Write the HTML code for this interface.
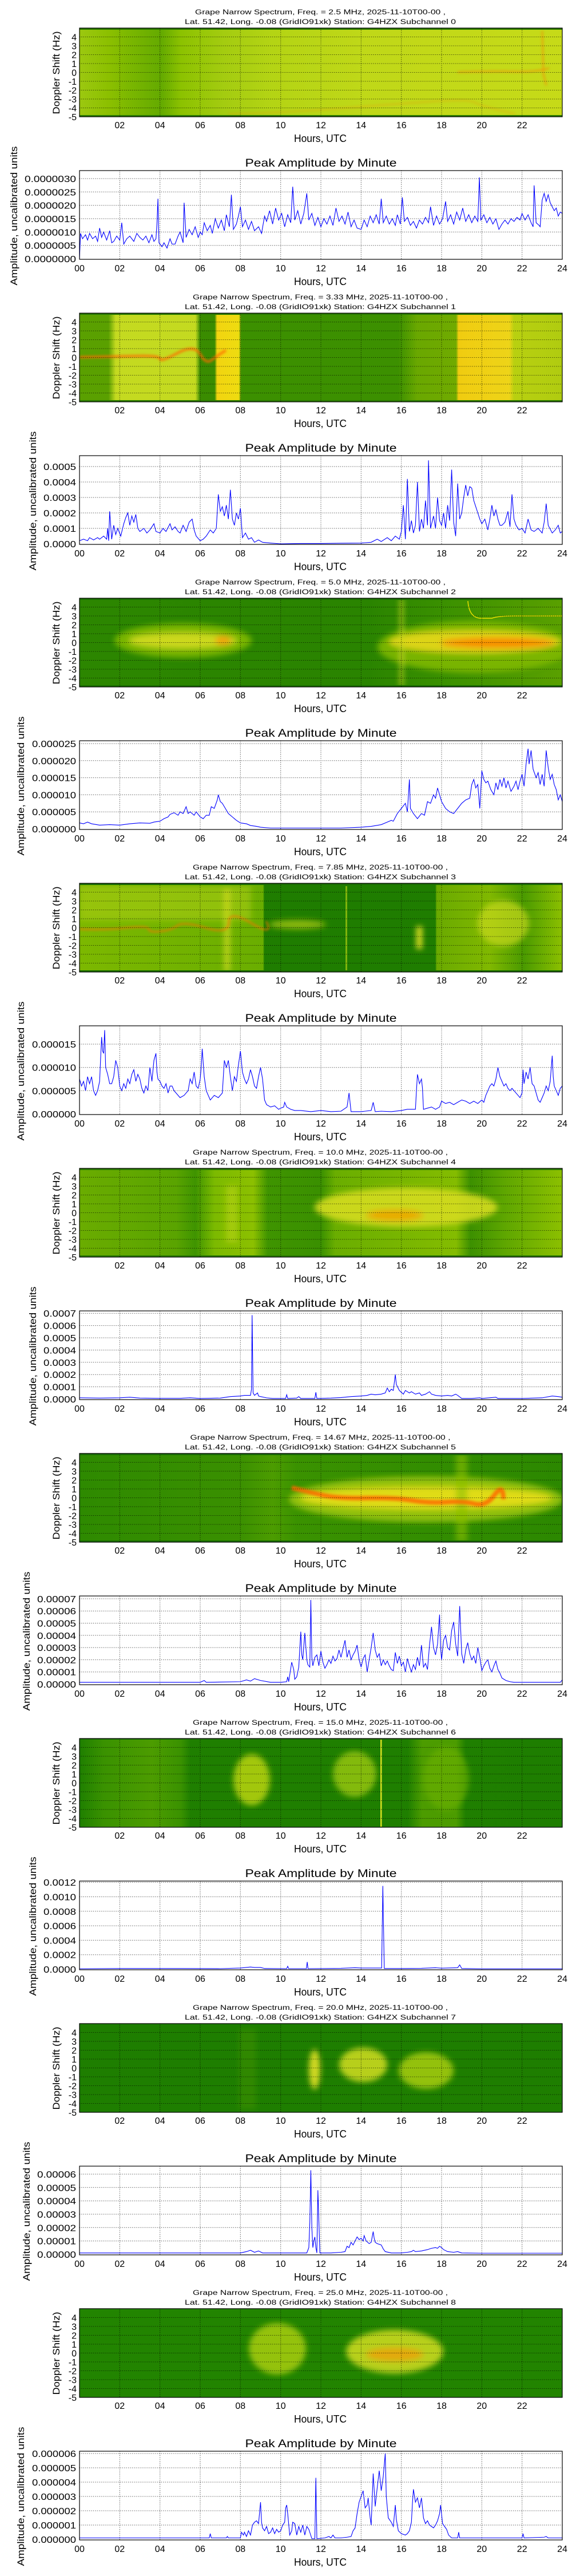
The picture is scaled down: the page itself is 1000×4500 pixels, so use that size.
<!DOCTYPE html>
<html><head><meta charset="utf-8">
<style>
html,body{margin:0;padding:0;background:#fff;}
svg{display:block;}
text{font-family:"Liberation Sans",sans-serif;fill:#000;}
.t{font-size:11.5px;text-anchor:middle;}
.tk{font-size:16px;}
.xm{text-anchor:middle;}
.ye{text-anchor:end;}
.hl{font-size:18px;text-anchor:middle;}
.at{font-size:19px;text-anchor:middle;}
.yl{font-size:17px;text-anchor:middle;}
.g{stroke:#000;stroke-width:1;stroke-dasharray:1.2,2.2;opacity:.75;fill:none;}
.bx{fill:none;stroke:#000;stroke-width:1.2;}
.c{fill:none;stroke:#0000ff;stroke-width:1.1;}
</style></head><body>
<svg width="1000" height="4500" viewBox="0 0 1000 4500" xmlns="http://www.w3.org/2000/svg">
<defs>
<filter id="b" x="-50%" y="-50%" width="200%" height="200%"><feGaussianBlur stdDeviation="5"/></filter>
<filter id="b2" x="-50%" y="-50%" width="200%" height="200%"><feGaussianBlur stdDeviation="2"/></filter>
<clipPath id="sc"><rect x="139" y="0" width="844" height="155"/></clipPath>
<linearGradient id="g0" x1="0" x2="1" y1="0" y2="0">
<stop offset="0" stop-color="#9cc810"/><stop offset=".06" stop-color="#8cc000"/><stop offset=".1" stop-color="#7cb800"/><stop offset=".17" stop-color="#64aa00"/><stop offset=".21" stop-color="#8cc200"/><stop offset=".3" stop-color="#a4cc10"/><stop offset=".4" stop-color="#b4d414"/><stop offset=".6" stop-color="#c0d818"/><stop offset="1" stop-color="#c6da18"/></linearGradient>
<linearGradient id="g1" x1="0" x2="1" y1="0" y2="0">
<stop offset="0" stop-color="#5aa000"/><stop offset=".06" stop-color="#5aa000"/><stop offset=".075" stop-color="#c4da20"/><stop offset=".24" stop-color="#c4da20"/><stop offset=".25" stop-color="#3a8c00"/><stop offset=".28" stop-color="#3a8c00"/><stop offset=".285" stop-color="#f2d410"/><stop offset=".33" stop-color="#eedc10"/><stop offset=".335" stop-color="#3c9000"/><stop offset=".66" stop-color="#3c9000"/><stop offset=".7" stop-color="#6aa800"/><stop offset=".78" stop-color="#70aa00"/><stop offset=".785" stop-color="#f0cc10"/><stop offset=".89" stop-color="#eed418"/><stop offset=".9" stop-color="#b8d010"/><stop offset="1" stop-color="#b0cc10"/></linearGradient>
<linearGradient id="g2" x1="0" x2="1" y1="0" y2="0">
<stop offset="0" stop-color="#2c8600"/><stop offset=".6" stop-color="#2a8400"/><stop offset=".75" stop-color="#3a9000"/><stop offset="1" stop-color="#5aa000"/></linearGradient>
<linearGradient id="g3" x1="0" x2="1" y1="0" y2="0">
<stop offset="0" stop-color="#7cb800"/><stop offset=".38" stop-color="#6aae00"/><stop offset=".383" stop-color="#1f7d00"/><stop offset=".737" stop-color="#1f7d00"/><stop offset=".74" stop-color="#6aaa00"/><stop offset=".85" stop-color="#80b800"/><stop offset=".92" stop-color="#4a9a00"/><stop offset="1" stop-color="#8cc000"/></linearGradient>
<linearGradient id="g4" x1="0" x2="1" y1="0" y2="0">
<stop offset="0" stop-color="#6aac00"/><stop offset=".2" stop-color="#5aa400"/><stop offset=".24" stop-color="#3f9400"/><stop offset=".28" stop-color="#7cba00"/><stop offset=".36" stop-color="#8cc000"/><stop offset=".39" stop-color="#3f9400"/><stop offset=".5" stop-color="#3a9000"/><stop offset=".53" stop-color="#6aae00"/><stop offset=".78" stop-color="#84bc00"/><stop offset=".81" stop-color="#3c9000"/><stop offset=".88" stop-color="#5ea600"/><stop offset="1" stop-color="#8cc000"/></linearGradient>
<linearGradient id="g5" x1="0" x2="1" y1="0" y2="0">
<stop offset="0" stop-color="#2e8a00"/><stop offset=".33" stop-color="#3a9000"/><stop offset=".4" stop-color="#4c9c00"/><stop offset=".45" stop-color="#3a9200"/><stop offset=".9" stop-color="#2e8a00"/><stop offset="1" stop-color="#2c8800"/></linearGradient>
<linearGradient id="g6" x1="0" x2="1" y1="0" y2="0">
<stop offset="0" stop-color="#1f7f00"/><stop offset=".05" stop-color="#3a9200"/><stop offset=".15" stop-color="#4c9c00"/><stop offset=".21" stop-color="#3a9200"/><stop offset=".23" stop-color="#1f7f00"/><stop offset=".68" stop-color="#1f7f00"/><stop offset=".71" stop-color="#4c9c00"/><stop offset=".78" stop-color="#4c9c00"/><stop offset=".8" stop-color="#1f7f00"/><stop offset="1" stop-color="#1e7e00"/></linearGradient>
</defs>
<rect width="1000" height="4500" fill="#fff"/>

<!-- ================= PANEL 0 ================= -->
<g transform="translate(0,49)">
<text class="t" x="560" y="-24" textLength="438" lengthAdjust="spacingAndGlyphs">Grape Narrow Spectrum, Freq. = 2.5 MHz, 2025-11-10T00-00 ,</text>
<text class="t" x="560" y="-7" textLength="474" lengthAdjust="spacingAndGlyphs">Lat.  51.42, Long.  -0.08 (GridIO91xk) Station: G4HZX Subchannel 0</text>
<g clip-path="url(#sc)">
<rect x="139" y="0" width="844" height="155" fill="url(#g0)"/>
<g filter="url(#b2)" fill="none" stroke="#ff8000" opacity=".8">
<path d="M800 77 Q860 75 900 76 T960 70" stroke-width="2"/>
<path d="M948 5 L950 80 L955 100" stroke-width="2"/>
<path d="M400 150 Q500 148 600 140 T760 128 T830 130 T900 150" stroke-width="1.5" opacity=".6"/>
</g>
<rect x="139" y="0" width="844" height="3" fill="#2a7a00"/><rect x="139" y="152" width="844" height="3" fill="#2a7a00"/>
</g>
</g>

<!-- ================= PANEL 1 ================= -->
<g transform="translate(0,547)">
<text class="t" x="560" y="-24" textLength="446" lengthAdjust="spacingAndGlyphs">Grape Narrow Spectrum, Freq. = 3.33 MHz, 2025-11-10T00-00 ,</text>
<text class="t" x="560" y="-7" textLength="474" lengthAdjust="spacingAndGlyphs">Lat.  51.42, Long.  -0.08 (GridIO91xk) Station: G4HZX Subchannel 1</text>
<g clip-path="url(#sc)">
<rect x="139" y="0" width="844" height="155" fill="url(#g1)"/>
<g filter="url(#b2)" fill="none" stroke="#ff6a00" opacity=".85">
<path d="M139 77 Q200 76 240 75 T280 80 T310 70 T350 72 T370 82 T395 65" stroke-width="4"/>
</g>
<rect x="139" y="0" width="844" height="3" fill="#2a7a00"/><rect x="139" y="152" width="844" height="3" fill="#2a7a00"/>
</g>
</g>

<!-- ================= PANEL 2 ================= -->
<g transform="translate(0,1045)">
<text class="t" x="560" y="-24" textLength="438" lengthAdjust="spacingAndGlyphs">Grape Narrow Spectrum, Freq. = 5.0 MHz, 2025-11-10T00-00 ,</text>
<text class="t" x="560" y="-7" textLength="474" lengthAdjust="spacingAndGlyphs">Lat.  51.42, Long.  -0.08 (GridIO91xk) Station: G4HZX Subchannel 2</text>
<g clip-path="url(#sc)">
<rect x="139" y="0" width="844" height="155" fill="url(#g2)"/>
<g filter="url(#b)">
<ellipse cx="320" cy="74" rx="120" ry="30" fill="#8cc000" opacity=".8"/>
<ellipse cx="320" cy="74" rx="95" ry="14" fill="#d4dc20" opacity=".9"/>
<ellipse cx="390" cy="74" rx="14" ry="8" fill="#ff9000" opacity=".7"/>
<ellipse cx="830" cy="85" rx="170" ry="45" fill="#80b800" opacity=".9"/>
<ellipse cx="830" cy="76" rx="150" ry="20" fill="#dcd418"/>
<ellipse cx="870" cy="78" rx="100" ry="9" fill="#ff7a00" opacity=".8"/>
<rect x="699" y="0" width="6" height="155" fill="#c8d820" opacity=".8"/>
</g>
<path d="M818 5 Q820 34 840 35 L860 35 Q870 31 900 31 L983 31" stroke="#e8e000" stroke-width="1.5" fill="none"/>
<rect x="139" y="0" width="844" height="3" fill="#1a6e00"/><rect x="139" y="152" width="844" height="3" fill="#1a6e00"/>
</g>
</g>

<!-- ================= PANEL 3 ================= -->
<g transform="translate(0,1543)">
<text class="t" x="560" y="-24" textLength="446" lengthAdjust="spacingAndGlyphs">Grape Narrow Spectrum, Freq. = 7.85 MHz, 2025-11-10T00-00 ,</text>
<text class="t" x="560" y="-7" textLength="474" lengthAdjust="spacingAndGlyphs">Lat.  51.42, Long.  -0.08 (GridIO91xk) Station: G4HZX Subchannel 3</text>
<g clip-path="url(#sc)">
<rect x="139" y="0" width="844" height="155" fill="url(#g3)"/>
<g filter="url(#b)">
<rect x="139" y="5" width="300" height="60" fill="#a8cc10" opacity=".6"/>
<rect x="392" y="10" width="10" height="145" fill="#d0dc20" opacity=".8"/>
<ellipse cx="520" cy="72" rx="50" ry="8" fill="#b8d010" opacity=".7"/>
<rect x="728" y="75" width="10" height="40" fill="#e0e020"/>
<ellipse cx="880" cy="70" rx="45" ry="40" fill="#c8d820" opacity=".7"/>
</g>
<rect x="604" y="5" width="3" height="150" fill="#a8cc10" opacity=".7"/>
<path d="M139 80 Q180 82 220 78 T260 80 T280 84 T310 74 T360 78 T400 68 T440 70 T465 66" stroke="#ff7000" stroke-width="2.5" fill="none" opacity=".8" filter="url(#b2)"/>
<rect x="139" y="0" width="844" height="3" fill="#1a6e00"/><rect x="139" y="152" width="844" height="3" fill="#1a6e00"/>
</g>
</g>

<!-- ================= PANEL 4 ================= -->
<g transform="translate(0,2041)">
<text class="t" x="560" y="-24" textLength="446" lengthAdjust="spacingAndGlyphs">Grape Narrow Spectrum, Freq. = 10.0 MHz, 2025-11-10T00-00 ,</text>
<text class="t" x="560" y="-7" textLength="474" lengthAdjust="spacingAndGlyphs">Lat.  51.42, Long.  -0.08 (GridIO91xk) Station: G4HZX Subchannel 4</text>
<g clip-path="url(#sc)">
<rect x="139" y="0" width="844" height="155" fill="url(#g4)"/>
<g filter="url(#b)">
<ellipse cx="710" cy="68" rx="160" ry="34" fill="#d4dc20" opacity=".9"/>
<ellipse cx="690" cy="82" rx="50" ry="10" fill="#f0a000" opacity=".8"/>
<rect x="395" y="30" width="20" height="100" fill="#b8d410" opacity=".6"/>
</g>
<rect x="139" y="0" width="844" height="3" fill="#2a7a00"/><rect x="139" y="152" width="844" height="3" fill="#2a7a00"/>
</g>
</g>

<!-- ================= PANEL 5 ================= -->
<g transform="translate(0,2539)">
<text class="t" x="560" y="-24" textLength="455" lengthAdjust="spacingAndGlyphs">Grape Narrow Spectrum, Freq. = 14.67 MHz, 2025-11-10T00-00 ,</text>
<text class="t" x="560" y="-7" textLength="474" lengthAdjust="spacingAndGlyphs">Lat.  51.42, Long.  -0.08 (GridIO91xk) Station: G4HZX Subchannel 5</text>
<g clip-path="url(#sc)">
<rect x="139" y="0" width="844" height="155" fill="url(#g5)"/>
<g filter="url(#b)">
<ellipse cx="745" cy="80" rx="240" ry="40" fill="#a8cc10" opacity=".8"/>
<ellipse cx="745" cy="78" rx="220" ry="20" fill="#e0dc18"/>
<rect x="797" y="0" width="20" height="155" fill="#8cc000" opacity=".6"/>
</g>
<path d="M510 60 Q530 65 560 72 T640 78 T720 82 T780 85 T830 88 T865 72 T880 80" stroke="#ff6a00" stroke-width="8" fill="none" opacity=".85" filter="url(#b2)"/>
<rect x="139" y="0" width="844" height="3" fill="#1a6e00"/><rect x="139" y="152" width="844" height="3" fill="#1a6e00"/>
</g>
</g>

<!-- ================= PANEL 6 ================= -->
<g transform="translate(0,3037)">
<text class="t" x="560" y="-24" textLength="446" lengthAdjust="spacingAndGlyphs">Grape Narrow Spectrum, Freq. = 15.0 MHz, 2025-11-10T00-00 ,</text>
<text class="t" x="560" y="-7" textLength="474" lengthAdjust="spacingAndGlyphs">Lat.  51.42, Long.  -0.08 (GridIO91xk) Station: G4HZX Subchannel 6</text>
<g clip-path="url(#sc)">
<rect x="139" y="0" width="844" height="155" fill="url(#g6)"/>
<g filter="url(#b)">
<ellipse cx="440" cy="72" rx="32" ry="45" fill="#b8d410" opacity=".85"/>
<ellipse cx="620" cy="62" rx="38" ry="40" fill="#9cc810" opacity=".8"/>
<ellipse cx="780" cy="70" rx="40" ry="55" fill="#6aae00" opacity=".7"/>
</g>
<rect x="665" y="2" width="2.5" height="152" fill="#d8e020"/>
<rect x="139" y="0" width="844" height="2" fill="#1a6e00"/>
</g>
</g>

<!-- ================= PANEL 7 ================= -->
<g transform="translate(0,3535)">
<text class="t" x="560" y="-24" textLength="446" lengthAdjust="spacingAndGlyphs">Grape Narrow Spectrum, Freq. = 20.0 MHz, 2025-11-10T00-00 ,</text>
<text class="t" x="560" y="-7" textLength="474" lengthAdjust="spacingAndGlyphs">Lat.  51.42, Long.  -0.08 (GridIO91xk) Station: G4HZX Subchannel 7</text>
<g clip-path="url(#sc)">
<rect x="139" y="0" width="844" height="155" fill="#1e7e00"/>
<g filter="url(#b)">
<ellipse cx="550" cy="80" rx="10" ry="35" fill="#d0d820"/>
<ellipse cx="635" cy="72" rx="42" ry="30" fill="#c8d820" opacity=".9"/>
<ellipse cx="745" cy="82" rx="48" ry="32" fill="#a8cc10" opacity=".85"/>
<rect x="418" y="10" width="30" height="140" fill="#3a9000" opacity=".6"/>
</g>
</g>
</g>

<!-- ================= PANEL 8 ================= -->
<g transform="translate(0,4033)">
<text class="t" x="560" y="-24" textLength="446" lengthAdjust="spacingAndGlyphs">Grape Narrow Spectrum, Freq. = 25.0 MHz, 2025-11-10T00-00 ,</text>
<text class="t" x="560" y="-7" textLength="474" lengthAdjust="spacingAndGlyphs">Lat.  51.42, Long.  -0.08 (GridIO91xk) Station: G4HZX Subchannel 8</text>
<g clip-path="url(#sc)">
<rect x="139" y="0" width="844" height="155" fill="#228400"/>
<g filter="url(#b)">
<ellipse cx="485" cy="70" rx="50" ry="45" fill="#a8cc10" opacity=".85"/>
<ellipse cx="690" cy="75" rx="85" ry="38" fill="#c8d820" opacity=".9"/>
<ellipse cx="690" cy="80" rx="50" ry="12" fill="#ff9000" opacity=".6"/>
</g>
</g>
</g>

<!-- ========= COMMON AXES FOR ALL PANELS (written out per panel) ========= -->
<g id="axes">
</g>

<!-- panel axes: repeated blocks -->
<g transform="translate(0,49)">
<path class="g" d="M209.3 0V155M279.7 0V155M350 0V155M420.3 0V155M490.7 0V155M561 0V155M631.3 0V155M701.7 0V155M772 0V155M842.3 0V155M912.7 0V155M139 15.5H983M139 31H983M139 46.5H983M139 62H983M139 77.5H983M139 93H983M139 108.5H983M139 124H983M139 139.5H983"/>
<rect class="bx" x="139" y="0" width="844" height="155"/>
<text class="yl" transform="translate(104,78) rotate(-90)" textLength="145" lengthAdjust="spacingAndGlyphs">Doppler Shift (Hz)</text>
<g class="tk ye"><text x="134" y="21.5">4</text><text x="134" y="37">3</text><text x="134" y="52.5">2</text><text x="134" y="68">1</text><text x="134" y="83.5">0</text><text x="134" y="99">-1</text><text x="134" y="114.5">-2</text><text x="134" y="130">-3</text><text x="134" y="145.5">-4</text><text x="134" y="161">-5</text></g>
<g class="tk xm"><text x="209.3" y="175">02</text><text x="279.7" y="175">04</text><text x="350" y="175">06</text><text x="420.3" y="175">08</text><text x="490.7" y="175">10</text><text x="561" y="175">12</text><text x="631.3" y="175">14</text><text x="701.7" y="175">16</text><text x="772" y="175">18</text><text x="842.3" y="175">20</text><text x="912.7" y="175">22</text></g>
<text class="hl" x="560" y="199" textLength="92" lengthAdjust="spacingAndGlyphs">Hours, UTC</text>
<text class="at" x="561" y="242" textLength="265" lengthAdjust="spacingAndGlyphs">Peak Amplitude by Minute</text>
<path class="g" d="M209.3 249V404M279.7 249V404M350 249V404M420.3 249V404M490.7 249V404M561 249V404M631.3 249V404M701.7 249V404M772 249V404M842.3 249V404M912.7 249V404M139 263H983M139 286.3H983M139 309.7H983M139 333H983M139 356.3H983M139 379.7H983"/>
<g class="tk ye"><text x="133" y="269" textLength="90" lengthAdjust="spacingAndGlyphs">0.0000030</text><text x="133" y="292.3" textLength="90" lengthAdjust="spacingAndGlyphs">0.0000025</text><text x="133" y="315.7" textLength="90" lengthAdjust="spacingAndGlyphs">0.0000020</text><text x="133" y="339" textLength="90" lengthAdjust="spacingAndGlyphs">0.0000015</text><text x="133" y="362.3" textLength="90" lengthAdjust="spacingAndGlyphs">0.0000010</text><text x="133" y="385.7" textLength="90" lengthAdjust="spacingAndGlyphs">0.0000005</text><text x="133" y="409" textLength="90" lengthAdjust="spacingAndGlyphs">0.0000000</text></g>
<g transform="translate(139,403) scale(35.1667,-23.3)"><polyline class="c" vector-effect="non-scaling-stroke" points="0,0 0.05,1.9 0.15,1.5 0.3,1.8 0.4,1.4 0.5,1.9 0.65,1.5 0.8,1.7 0.9,1.3 1,2.3 1.1,1.6 1.2,2.0 1.35,1.4 1.5,2.1 1.6,1.2 1.7,1.3 1.85,1.7 2,1.4 2.1,2.7 2.2,1.1 2.35,1.5 2.5,1.7 2.7,1.3 2.85,1.9 3,1.6 3.15,1.4 3.3,1.7 3.45,1.2 3.6,1.8 3.7,1.3 3.8,1.5 3.85,2.6 3.9,4.5 3.95,1.2 4.1,0.9 4.2,1.2 4.35,0.8 4.5,1.5 4.6,1.1 4.75,1.1 4.9,1.7 5,2.0 5.15,1.2 5.2,4.2 5.3,1.6 5.45,2.2 5.6,1.8 5.75,2.4 5.9,1.6 6,2.0 6.1,1.8 6.2,2.7 6.35,2.1 6.5,2.5 6.6,1.9 6.75,3.0 6.9,2.3 7.05,2.9 7.2,2.1 7.3,3.3 7.45,2.4 7.55,4.8 7.65,2.2 7.8,2.6 7.9,3.2 8,3.9 8.1,2.4 8.25,2.9 8.4,2.2 8.55,2.8 8.7,2.1 8.9,2.4 9.05,1.9 9.2,3.2 9.3,2.8 9.45,3.6 9.6,2.6 9.75,3.8 9.9,2.9 10.05,3.4 10.2,2.4 10.35,3.3 10.5,2.7 10.6,5.4 10.7,2.9 10.85,3.6 11,2.6 11.15,3.4 11.3,4.9 11.4,2.9 11.55,3.4 11.7,2.5 11.85,3.1 12,2.4 12.15,3.0 12.3,2.6 12.45,3.2 12.6,2.5 12.75,3.8 12.9,2.8 13.05,3.2 13.2,2.6 13.35,3.5 13.5,2.4 13.65,2.9 13.8,2.3 14,2.2 14.15,2.9 14.3,2.4 14.45,3.2 14.6,2.7 14.75,3.3 14.9,2.6 15,4.5 15.1,2.7 15.25,3.2 15.4,2.6 15.55,3.0 15.7,2.5 15.8,3.3 15.95,2.6 16.05,4.6 16.15,2.8 16.3,3.1 16.45,2.5 16.6,2.8 16.75,2.3 16.9,2.9 17.05,2.6 17.2,3.1 17.35,2.7 17.45,3.9 17.6,2.5 17.75,3.2 17.9,2.6 18.05,3.0 18.2,4.3 18.3,2.8 18.45,3.3 18.6,2.6 18.75,3.5 18.9,2.9 19.05,3.8 19.2,2.8 19.35,3.3 19.5,2.7 19.65,3.2 19.8,2.8 19.88,6.1 19.95,2.9 20.1,3.3 20.25,2.7 20.4,3.1 20.55,2.6 20.7,3.0 20.85,2.2 21,2.6 21.15,2.9 21.3,2.6 21.45,3.0 21.6,2.8 21.75,3.1 21.9,2.9 22,3.4 22.15,2.9 22.3,3.3 22.45,2.7 22.55,2.4 22.6,5.5 22.7,2.7 22.85,2.5 22.9,2.4 23,4.4 23.1,4.9 23.2,4.3 23.3,4.8 23.4,4.2 23.5,3.9 23.6,3.6 23.7,3.8 23.8,3.2 23.9,3.5 24,3.4"/></g>
<rect class="bx" x="139" y="249" width="844" height="155"/>
<g class="tk xm"><text x="139" y="425">00</text><text x="209.3" y="425">02</text><text x="279.7" y="425">04</text><text x="350" y="425">06</text><text x="420.3" y="425">08</text><text x="490.7" y="425">10</text><text x="561" y="425">12</text><text x="631.3" y="425">14</text><text x="701.7" y="425">16</text><text x="772" y="425">18</text><text x="842.3" y="425">20</text><text x="912.7" y="425">22</text><text x="983" y="425">24</text></g>
<text class="hl" x="560" y="449" textLength="92" lengthAdjust="spacingAndGlyphs">Hours, UTC</text>
<text class="yl" transform="translate(30,328) rotate(-90)" textLength="243" lengthAdjust="spacingAndGlyphs">Amplitude, uncalibrated units</text>
</g>

<g transform="translate(0,547)">
<path class="g" d="M209.3 0V155M279.7 0V155M350 0V155M420.3 0V155M490.7 0V155M561 0V155M631.3 0V155M701.7 0V155M772 0V155M842.3 0V155M912.7 0V155M139 15.5H983M139 31H983M139 46.5H983M139 62H983M139 77.5H983M139 93H983M139 108.5H983M139 124H983M139 139.5H983"/>
<rect class="bx" x="139" y="0" width="844" height="155"/>
<text class="yl" transform="translate(104,78) rotate(-90)" textLength="145" lengthAdjust="spacingAndGlyphs">Doppler Shift (Hz)</text>
<g class="tk ye"><text x="134" y="21.5">4</text><text x="134" y="37">3</text><text x="134" y="52.5">2</text><text x="134" y="68">1</text><text x="134" y="83.5">0</text><text x="134" y="99">-1</text><text x="134" y="114.5">-2</text><text x="134" y="130">-3</text><text x="134" y="145.5">-4</text><text x="134" y="161">-5</text></g>
<g class="tk xm"><text x="209.3" y="175">02</text><text x="279.7" y="175">04</text><text x="350" y="175">06</text><text x="420.3" y="175">08</text><text x="490.7" y="175">10</text><text x="561" y="175">12</text><text x="631.3" y="175">14</text><text x="701.7" y="175">16</text><text x="772" y="175">18</text><text x="842.3" y="175">20</text><text x="912.7" y="175">22</text></g>
<text class="hl" x="560" y="199" textLength="92" lengthAdjust="spacingAndGlyphs">Hours, UTC</text>
<text class="at" x="561" y="242" textLength="265" lengthAdjust="spacingAndGlyphs">Peak Amplitude by Minute</text>
<path class="g" d="M209.3 249V404M279.7 249V404M350 249V404M420.3 249V404M490.7 249V404M561 249V404M631.3 249V404M701.7 249V404M772 249V404M842.3 249V404M912.7 249V404M139 268H983M139 295H983M139 322H983M139 349H983M139 376H983"/>
<g class="tk ye"><text x="133" y="274" textLength="57" lengthAdjust="spacingAndGlyphs">0.0005</text><text x="133" y="301" textLength="57" lengthAdjust="spacingAndGlyphs">0.0004</text><text x="133" y="328" textLength="57" lengthAdjust="spacingAndGlyphs">0.0003</text><text x="133" y="355" textLength="57" lengthAdjust="spacingAndGlyphs">0.0002</text><text x="133" y="382" textLength="57" lengthAdjust="spacingAndGlyphs">0.0001</text><text x="133" y="409" textLength="57" lengthAdjust="spacingAndGlyphs">0.0000</text></g>
<g transform="translate(139,403) scale(35.1667,-27)"><polyline class="c" vector-effect="non-scaling-stroke" points="0,0.2 0.2,0.3 0.4,0.2 0.5,0.4 0.7,0.25 0.9,0.4 1,0.3 1.2,0.5 1.35,0.3 1.4,1.0 1.45,0.2 1.5,2.1 1.6,0.3 1.7,1.2 1.8,0.6 1.9,1.0 2.05,0.5 2.2,1.3 2.3,1.7 2.4,2.0 2.5,1.2 2.6,1.8 2.7,1.4 2.8,1.9 2.9,1.0 3,0.8 3.2,1.0 3.35,0.7 3.5,0.9 3.7,1.3 3.8,0.8 4,0.7 4.15,1.0 4.3,0.8 4.5,1.3 4.6,0.9 4.75,1.1 4.9,0.8 5,0.7 5.15,1.2 5.3,0.8 5.45,1.4 5.6,1.6 5.7,0.9 5.8,0.5 6,0.2 6.15,0.3 6.3,0.5 6.5,0.9 6.65,0.7 6.8,1.0 6.9,3.2 7,2.1 7.1,2.4 7.2,1.8 7.3,2.5 7.4,1.6 7.5,3.5 7.6,1.6 7.7,1.2 7.8,2.0 7.9,1.6 8,2.3 8.1,0.4 8.25,0.7 8.4,0.3 8.55,0.4 8.7,0.1 8.9,0.25 9.1,0.1 9.5,0.05 10,0 11,0.02 12,0.02 13,0.04 14,0.05 14.5,0.1 14.8,0.3 15,0.15 15.3,0.4 15.5,0.2 15.7,0.5 15.9,0.3 16,0.8 16.1,2.5 16.2,0.3 16.3,4.2 16.4,0.8 16.5,1.5 16.6,0.7 16.7,1.2 16.8,4.0 16.9,0.8 17,1.6 17.1,1.0 17.2,2.8 17.3,1.2 17.35,5.4 17.45,1.0 17.6,1.8 17.7,1.0 17.8,3.0 17.9,1.5 18,1.2 18.1,2.0 18.2,1.0 18.3,2.5 18.4,1.5 18.5,4.8 18.6,1.4 18.7,0.5 18.8,3.9 18.9,1.6 19,2.0 19.1,3.0 19.2,3.8 19.3,3.1 19.4,3.7 19.5,3.6 19.6,2.8 19.7,2.4 19.8,2.0 19.9,1.6 20,1.3 20.15,1.6 20.3,0.9 20.4,1.6 20.5,2.5 20.6,1.8 20.7,2.2 20.8,1.6 20.9,1.2 21,1.2 21.15,1.4 21.3,2.1 21.4,1.1 21.5,3.2 21.6,1.6 21.7,1.2 21.85,0.9 22,1.0 22.15,0.7 22.3,1.6 22.45,0.9 22.6,0.8 22.8,1.0 23,0.7 23.1,1.4 23.2,2.6 23.3,1.2 23.5,0.7 23.65,0.9 23.8,1.2 23.9,0.7 24,0.8"/></g>
<rect class="bx" x="139" y="249" width="844" height="155"/>
<g class="tk xm"><text x="139" y="425">00</text><text x="209.3" y="425">02</text><text x="279.7" y="425">04</text><text x="350" y="425">06</text><text x="420.3" y="425">08</text><text x="490.7" y="425">10</text><text x="561" y="425">12</text><text x="631.3" y="425">14</text><text x="701.7" y="425">16</text><text x="772" y="425">18</text><text x="842.3" y="425">20</text><text x="912.7" y="425">22</text><text x="983" y="425">24</text></g>
<text class="hl" x="560" y="449" textLength="92" lengthAdjust="spacingAndGlyphs">Hours, UTC</text>
<text class="yl" transform="translate(63,328) rotate(-90)" textLength="243" lengthAdjust="spacingAndGlyphs">Amplitude, uncalibrated units</text>
</g>

<g transform="translate(0,1045)">
<path class="g" d="M209.3 0V155M279.7 0V155M350 0V155M420.3 0V155M490.7 0V155M561 0V155M631.3 0V155M701.7 0V155M772 0V155M842.3 0V155M912.7 0V155M139 15.5H983M139 31H983M139 46.5H983M139 62H983M139 77.5H983M139 93H983M139 108.5H983M139 124H983M139 139.5H983"/>
<rect class="bx" x="139" y="0" width="844" height="155"/>
<text class="yl" transform="translate(104,78) rotate(-90)" textLength="145" lengthAdjust="spacingAndGlyphs">Doppler Shift (Hz)</text>
<g class="tk ye"><text x="134" y="21.5">4</text><text x="134" y="37">3</text><text x="134" y="52.5">2</text><text x="134" y="68">1</text><text x="134" y="83.5">0</text><text x="134" y="99">-1</text><text x="134" y="114.5">-2</text><text x="134" y="130">-3</text><text x="134" y="145.5">-4</text><text x="134" y="161">-5</text></g>
<g class="tk xm"><text x="209.3" y="175">02</text><text x="279.7" y="175">04</text><text x="350" y="175">06</text><text x="420.3" y="175">08</text><text x="490.7" y="175">10</text><text x="561" y="175">12</text><text x="631.3" y="175">14</text><text x="701.7" y="175">16</text><text x="772" y="175">18</text><text x="842.3" y="175">20</text><text x="912.7" y="175">22</text></g>
<text class="hl" x="560" y="199" textLength="92" lengthAdjust="spacingAndGlyphs">Hours, UTC</text>
<text class="at" x="561" y="242" textLength="265" lengthAdjust="spacingAndGlyphs">Peak Amplitude by Minute</text>
<path class="g" d="M209.3 249V404M279.7 249V404M350 249V404M420.3 249V404M490.7 249V404M561 249V404M631.3 249V404M701.7 249V404M772 249V404M842.3 249V404M912.7 249V404M139 254H983M139 283.8H983M139 313.6H983M139 343.4H983M139 373.2H983"/>
<g class="tk ye"><text x="133" y="260" textLength="77" lengthAdjust="spacingAndGlyphs">0.000025</text><text x="133" y="289.8" textLength="77" lengthAdjust="spacingAndGlyphs">0.000020</text><text x="133" y="319.6" textLength="77" lengthAdjust="spacingAndGlyphs">0.000015</text><text x="133" y="349.4" textLength="77" lengthAdjust="spacingAndGlyphs">0.000010</text><text x="133" y="379.2" textLength="77" lengthAdjust="spacingAndGlyphs">0.000005</text><text x="133" y="409" textLength="77" lengthAdjust="spacingAndGlyphs">0.000000</text></g>
<g transform="translate(139,403) scale(35.1667,-29.8)"><polyline class="c" vector-effect="non-scaling-stroke" points="0,0.35 0.2,0.3 0.4,0.4 0.6,0.3 1,0.22 1.5,0.25 2,0.22 2.5,0.3 3,0.35 3.5,0.33 3.7,0.4 4,0.45 4.2,0.6 4.4,0.7 4.5,0.85 4.7,0.95 4.9,0.8 5,1.0 5.15,0.9 5.3,1.3 5.4,0.9 5.5,1.0 5.7,0.8 5.8,1.0 6,0.7 6.15,0.6 6.3,0.8 6.45,0.8 6.55,1.3 6.7,1.2 6.85,1.7 6.9,2.0 7,1.6 7.1,1.5 7.2,1.3 7.4,0.9 7.6,0.7 7.8,0.5 8,0.35 8.3,0.3 8.5,0.2 8.8,0.15 9,0.1 9.5,0.05 10,0.05 11,0.05 12,0.05 13,0.05 14,0.1 14.5,0.15 15,0.25 15.3,0.4 15.5,0.5 15.6,0.45 15.8,0.9 16,1.2 16.2,1.5 16.3,1.0 16.4,2.9 16.45,1.2 16.6,0.9 16.8,0.6 17,0.9 17.15,0.8 17.3,1.6 17.45,1.5 17.6,2.0 17.7,1.8 17.8,2.4 17.9,2.0 18,1.6 18.2,1.2 18.4,1.0 18.6,0.9 18.8,1.2 19,1.5 19.2,1.7 19.4,1.8 19.5,2.6 19.6,2.9 19.7,2.4 19.8,2.6 19.9,1.2 20,3.4 20.1,2.9 20.2,2.7 20.3,2.8 20.45,2.3 20.6,2.0 20.7,2.7 20.8,2.3 20.9,2.9 21,2.5 21.1,3.0 21.2,2.4 21.3,2.8 21.45,2.2 21.6,2.5 21.7,2.8 21.8,2.3 21.9,2.8 22,3.2 22.1,2.5 22.2,3.8 22.3,4.7 22.35,3.8 22.45,4.6 22.55,3.5 22.7,3.0 22.8,3.3 22.9,2.6 23,3.2 23.1,2.5 23.2,4.6 23.3,3.6 23.4,2.9 23.5,3.2 23.6,2.6 23.7,2.3 23.8,1.7 23.9,2.0 24,1.6"/></g>
<rect class="bx" x="139" y="249" width="844" height="155"/>
<g class="tk xm"><text x="139" y="425">00</text><text x="209.3" y="425">02</text><text x="279.7" y="425">04</text><text x="350" y="425">06</text><text x="420.3" y="425">08</text><text x="490.7" y="425">10</text><text x="561" y="425">12</text><text x="631.3" y="425">14</text><text x="701.7" y="425">16</text><text x="772" y="425">18</text><text x="842.3" y="425">20</text><text x="912.7" y="425">22</text><text x="983" y="425">24</text></g>
<text class="hl" x="560" y="449" textLength="92" lengthAdjust="spacingAndGlyphs">Hours, UTC</text>
<text class="yl" transform="translate(42,328) rotate(-90)" textLength="243" lengthAdjust="spacingAndGlyphs">Amplitude, uncalibrated units</text>
</g>

<g transform="translate(0,1543)">
<path class="g" d="M209.3 0V155M279.7 0V155M350 0V155M420.3 0V155M490.7 0V155M561 0V155M631.3 0V155M701.7 0V155M772 0V155M842.3 0V155M912.7 0V155M139 15.5H983M139 31H983M139 46.5H983M139 62H983M139 77.5H983M139 93H983M139 108.5H983M139 124H983M139 139.5H983"/>
<rect class="bx" x="139" y="0" width="844" height="155"/>
<text class="yl" transform="translate(104,78) rotate(-90)" textLength="145" lengthAdjust="spacingAndGlyphs">Doppler Shift (Hz)</text>
<g class="tk ye"><text x="134" y="21.5">4</text><text x="134" y="37">3</text><text x="134" y="52.5">2</text><text x="134" y="68">1</text><text x="134" y="83.5">0</text><text x="134" y="99">-1</text><text x="134" y="114.5">-2</text><text x="134" y="130">-3</text><text x="134" y="145.5">-4</text><text x="134" y="161">-5</text></g>
<g class="tk xm"><text x="209.3" y="175">02</text><text x="279.7" y="175">04</text><text x="350" y="175">06</text><text x="420.3" y="175">08</text><text x="490.7" y="175">10</text><text x="561" y="175">12</text><text x="631.3" y="175">14</text><text x="701.7" y="175">16</text><text x="772" y="175">18</text><text x="842.3" y="175">20</text><text x="912.7" y="175">22</text></g>
<text class="hl" x="560" y="199" textLength="92" lengthAdjust="spacingAndGlyphs">Hours, UTC</text>
<text class="at" x="561" y="242" textLength="265" lengthAdjust="spacingAndGlyphs">Peak Amplitude by Minute</text>
<path class="g" d="M209.3 249V404M279.7 249V404M350 249V404M420.3 249V404M490.7 249V404M561 249V404M631.3 249V404M701.7 249V404M772 249V404M842.3 249V404M912.7 249V404M139 281H983M139 321.7H983M139 362.3H983"/>
<g class="tk ye"><text x="133" y="287" textLength="77" lengthAdjust="spacingAndGlyphs">0.000015</text><text x="133" y="327.7" textLength="77" lengthAdjust="spacingAndGlyphs">0.000010</text><text x="133" y="368.3" textLength="77" lengthAdjust="spacingAndGlyphs">0.000005</text><text x="133" y="409" textLength="77" lengthAdjust="spacingAndGlyphs">0.000000</text></g>
<g transform="translate(139,403) scale(35.1667,-40.7)"><polyline class="c" vector-effect="non-scaling-stroke" points="0,1.5 0.1,1.2 0.2,1.4 0.3,1.0 0.4,1.6 0.5,1.3 0.6,1.6 0.7,1.0 0.8,0.8 0.9,1.0 1,1.4 1.05,2.4 1.1,3.3 1.15,2.7 1.2,2.6 1.25,3.6 1.3,2.0 1.4,1.7 1.5,1.3 1.6,1.3 1.7,1.6 1.8,2.3 1.9,2.0 2,1.2 2.1,1.0 2.2,1.3 2.3,1.1 2.4,1.5 2.5,1.3 2.6,1.7 2.7,1.9 2.8,1.4 2.9,1.7 3,1.5 3.1,1.1 3.2,0.9 3.3,1.2 3.4,1.0 3.5,2.0 3.6,1.4 3.7,2.3 3.8,2.6 3.85,1.8 3.9,1.5 4,1.4 4.1,1.2 4.2,1.1 4.3,1.3 4.4,0.9 4.5,1.2 4.6,1.2 4.7,1.0 4.8,0.9 5,0.7 5.2,0.8 5.4,1.0 5.5,1.5 5.6,1.3 5.7,1.8 5.8,1.2 5.9,1.1 6,1.5 6.05,2.0 6.1,2.8 6.2,1.6 6.3,1.0 6.4,0.8 6.5,0.6 6.7,0.8 6.9,0.7 7.1,0.9 7.2,2.3 7.3,2.0 7.4,2.3 7.5,1.6 7.6,1.0 7.7,1.6 7.8,1.4 7.9,2.1 8,2.7 8.1,1.8 8.2,1.5 8.3,1.3 8.4,1.5 8.5,1.9 8.6,1.6 8.7,1.2 8.8,1.1 8.9,1.6 9,2.0 9.1,1.5 9.2,0.6 9.3,0.4 9.5,0.3 9.7,0.35 9.9,0.2 10,0.25 10.15,0.3 10.2,0.5 10.3,0.3 10.5,0.2 10.7,0.15 11,0.15 11.5,0.1 12,0.15 12.5,0.1 13,0.12 13.3,0.3 13.4,0.9 13.5,0.1 14,0.1 14.5,0.15 14.6,0.5 14.7,0.1 15,0.12 15.5,0.1 16,0.15 16.3,0.2 16.7,0.2 16.75,1.0 16.8,1.7 16.9,1.3 17,1.5 17.05,1.1 17.1,0.2 17.3,0.25 17.5,0.3 17.7,0.2 17.9,0.3 18,0.55 18.2,0.45 18.4,0.5 18.6,0.4 18.8,0.5 19,0.6 19.2,0.55 19.4,0.45 19.6,0.55 19.8,0.45 20,0.6 20.1,0.5 20.2,0.8 20.3,1.0 20.4,1.2 20.5,1.3 20.6,1.2 20.7,1.5 20.8,2.0 20.9,1.6 21,1.4 21.1,1.2 21.2,1.3 21.3,1.1 21.4,1.0 21.5,1.1 21.6,1.0 21.8,0.8 21.9,0.7 22,0.9 22.05,1.9 22.1,1.3 22.2,1.8 22.3,1.5 22.4,2.0 22.5,1.3 22.6,1.2 22.7,0.9 22.8,0.6 22.9,0.5 23,0.7 23.1,0.9 23.2,1.2 23.3,1.0 23.4,1.4 23.5,2.5 23.55,1.6 23.6,1.2 23.7,1.0 23.8,0.8 23.9,1.1 24,1.2"/></g>
<rect class="bx" x="139" y="249" width="844" height="155"/>
<g class="tk xm"><text x="139" y="425">00</text><text x="209.3" y="425">02</text><text x="279.7" y="425">04</text><text x="350" y="425">06</text><text x="420.3" y="425">08</text><text x="490.7" y="425">10</text><text x="561" y="425">12</text><text x="631.3" y="425">14</text><text x="701.7" y="425">16</text><text x="772" y="425">18</text><text x="842.3" y="425">20</text><text x="912.7" y="425">22</text><text x="983" y="425">24</text></g>
<text class="hl" x="560" y="449" textLength="92" lengthAdjust="spacingAndGlyphs">Hours, UTC</text>
<text class="yl" transform="translate(42,328) rotate(-90)" textLength="243" lengthAdjust="spacingAndGlyphs">Amplitude, uncalibrated units</text>
</g>

<g transform="translate(0,2041)">
<path class="g" d="M209.3 0V155M279.7 0V155M350 0V155M420.3 0V155M490.7 0V155M561 0V155M631.3 0V155M701.7 0V155M772 0V155M842.3 0V155M912.7 0V155M139 15.5H983M139 31H983M139 46.5H983M139 62H983M139 77.5H983M139 93H983M139 108.5H983M139 124H983M139 139.5H983"/>
<rect class="bx" x="139" y="0" width="844" height="155"/>
<text class="yl" transform="translate(104,78) rotate(-90)" textLength="145" lengthAdjust="spacingAndGlyphs">Doppler Shift (Hz)</text>
<g class="tk ye"><text x="134" y="21.5">4</text><text x="134" y="37">3</text><text x="134" y="52.5">2</text><text x="134" y="68">1</text><text x="134" y="83.5">0</text><text x="134" y="99">-1</text><text x="134" y="114.5">-2</text><text x="134" y="130">-3</text><text x="134" y="145.5">-4</text><text x="134" y="161">-5</text></g>
<g class="tk xm"><text x="209.3" y="175">02</text><text x="279.7" y="175">04</text><text x="350" y="175">06</text><text x="420.3" y="175">08</text><text x="490.7" y="175">10</text><text x="561" y="175">12</text><text x="631.3" y="175">14</text><text x="701.7" y="175">16</text><text x="772" y="175">18</text><text x="842.3" y="175">20</text><text x="912.7" y="175">22</text></g>
<text class="hl" x="560" y="199" textLength="92" lengthAdjust="spacingAndGlyphs">Hours, UTC</text>
<text class="at" x="561" y="242" textLength="265" lengthAdjust="spacingAndGlyphs">Peak Amplitude by Minute</text>
<path class="g" d="M209.3 249V404M279.7 249V404M350 249V404M420.3 249V404M490.7 249V404M561 249V404M631.3 249V404M701.7 249V404M772 249V404M842.3 249V404M912.7 249V404M139 253.2H983M139 274.6H983M139 296H983M139 317.4H983M139 338.8H983M139 360.2H983M139 381.6H983"/>
<g class="tk ye"><text x="133" y="259.2" textLength="57" lengthAdjust="spacingAndGlyphs">0.0007</text><text x="133" y="280.6" textLength="57" lengthAdjust="spacingAndGlyphs">0.0006</text><text x="133" y="302" textLength="57" lengthAdjust="spacingAndGlyphs">0.0005</text><text x="133" y="323.4" textLength="57" lengthAdjust="spacingAndGlyphs">0.0004</text><text x="133" y="344.8" textLength="57" lengthAdjust="spacingAndGlyphs">0.0003</text><text x="133" y="366.2" textLength="57" lengthAdjust="spacingAndGlyphs">0.0002</text><text x="133" y="387.6" textLength="57" lengthAdjust="spacingAndGlyphs">0.0001</text><text x="133" y="409" textLength="57" lengthAdjust="spacingAndGlyphs">0.0000</text></g>
<g transform="translate(139,403) scale(35.1667,-21.4)"><polyline class="c" vector-effect="non-scaling-stroke" points="0,0.1 1,0.08 2,0.1 2.5,0.15 3,0.08 4,0.06 5,0.06 5.5,0.1 6,0.05 7,0.08 7.5,0.2 8,0.25 8.2,0.3 8.5,0.3 8.55,0.8 8.58,6.85 8.63,0.5 8.7,0.3 8.85,0.5 8.9,0.25 9,0.2 9.3,0.1 9.6,0.05 10,0.05 10.25,0.05 10.3,0.35 10.35,0.05 10.8,0.08 10.9,0.2 11,0.05 11.7,0.05 11.75,0.55 11.8,0.05 12.5,0.08 13,0.12 13.5,0.2 14,0.25 14.3,0.3 14.5,0.4 14.7,0.35 15,0.4 15.2,0.5 15.3,0.9 15.4,0.6 15.5,0.8 15.6,0.7 15.7,2.0 15.75,1.2 15.9,0.7 16.1,0.4 16.2,0.7 16.3,0.6 16.4,0.5 16.5,0.6 16.7,0.4 16.9,0.5 17,0.3 17.2,0.4 17.4,0.6 17.5,0.4 17.7,0.3 18,0.25 18.3,0.3 18.5,0.25 18.7,0.4 18.8,0.3 19,0.05 19.5,0.05 19.9,0.1 20,0.05 20.7,0.15 20.8,0.05 22,0.05 23,0.1 23.5,0.25 23.8,0.2 24,0.15"/></g>
<rect class="bx" x="139" y="249" width="844" height="155"/>
<g class="tk xm"><text x="139" y="425">00</text><text x="209.3" y="425">02</text><text x="279.7" y="425">04</text><text x="350" y="425">06</text><text x="420.3" y="425">08</text><text x="490.7" y="425">10</text><text x="561" y="425">12</text><text x="631.3" y="425">14</text><text x="701.7" y="425">16</text><text x="772" y="425">18</text><text x="842.3" y="425">20</text><text x="912.7" y="425">22</text><text x="983" y="425">24</text></g>
<text class="hl" x="560" y="449" textLength="92" lengthAdjust="spacingAndGlyphs">Hours, UTC</text>
<text class="yl" transform="translate(63,328) rotate(-90)" textLength="243" lengthAdjust="spacingAndGlyphs">Amplitude, uncalibrated units</text>
</g>

<g transform="translate(0,2539)">
<path class="g" d="M209.3 0V155M279.7 0V155M350 0V155M420.3 0V155M490.7 0V155M561 0V155M631.3 0V155M701.7 0V155M772 0V155M842.3 0V155M912.7 0V155M139 15.5H983M139 31H983M139 46.5H983M139 62H983M139 77.5H983M139 93H983M139 108.5H983M139 124H983M139 139.5H983"/>
<rect class="bx" x="139" y="0" width="844" height="155"/>
<text class="yl" transform="translate(104,78) rotate(-90)" textLength="145" lengthAdjust="spacingAndGlyphs">Doppler Shift (Hz)</text>
<g class="tk ye"><text x="134" y="21.5">4</text><text x="134" y="37">3</text><text x="134" y="52.5">2</text><text x="134" y="68">1</text><text x="134" y="83.5">0</text><text x="134" y="99">-1</text><text x="134" y="114.5">-2</text><text x="134" y="130">-3</text><text x="134" y="145.5">-4</text><text x="134" y="161">-5</text></g>
<g class="tk xm"><text x="209.3" y="175">02</text><text x="279.7" y="175">04</text><text x="350" y="175">06</text><text x="420.3" y="175">08</text><text x="490.7" y="175">10</text><text x="561" y="175">12</text><text x="631.3" y="175">14</text><text x="701.7" y="175">16</text><text x="772" y="175">18</text><text x="842.3" y="175">20</text><text x="912.7" y="175">22</text></g>
<text class="hl" x="560" y="199" textLength="92" lengthAdjust="spacingAndGlyphs">Hours, UTC</text>
<text class="at" x="561" y="242" textLength="265" lengthAdjust="spacingAndGlyphs">Peak Amplitude by Minute</text>
<path class="g" d="M209.3 249V404M279.7 249V404M350 249V404M420.3 249V404M490.7 249V404M561 249V404M631.3 249V404M701.7 249V404M772 249V404M842.3 249V404M912.7 249V404M139 253.9H983M139 275.2H983M139 296.5H983M139 317.8H983M139 339.1H983M139 360.4H983M139 381.7H983"/>
<g class="tk ye"><text x="133" y="259.9" textLength="68" lengthAdjust="spacingAndGlyphs">0.00007</text><text x="133" y="281.2" textLength="68" lengthAdjust="spacingAndGlyphs">0.00006</text><text x="133" y="302.5" textLength="68" lengthAdjust="spacingAndGlyphs">0.00005</text><text x="133" y="323.8" textLength="68" lengthAdjust="spacingAndGlyphs">0.00004</text><text x="133" y="345.1" textLength="68" lengthAdjust="spacingAndGlyphs">0.00003</text><text x="133" y="366.4" textLength="68" lengthAdjust="spacingAndGlyphs">0.00002</text><text x="133" y="387.7" textLength="68" lengthAdjust="spacingAndGlyphs">0.00001</text><text x="133" y="409" textLength="68" lengthAdjust="spacingAndGlyphs">0.00000</text></g>
<g transform="translate(139,403) scale(35.1667,-21.3)"><polyline class="c" vector-effect="non-scaling-stroke" points="0,0.15 2,0.15 4,0.15 6,0.15 6.2,0.3 6.3,0.15 8,0.2 8.3,0.35 8.5,0.25 8.7,0.45 9,0.3 9.5,0.15 10,0.15 10.3,0.2 10.35,0.6 10.4,0.2 10.55,1.8 10.65,1.2 10.7,0.4 10.8,0.6 10.9,1.4 11,4.3 11.05,2.4 11.1,2.0 11.2,4.2 11.3,2.0 11.35,1.6 11.45,1.4 11.5,6.9 11.55,2.2 11.6,1.5 11.7,2.2 11.8,2.4 11.9,1.5 12,2.7 12.1,1.8 12.2,1.3 12.3,1.6 12.4,2.0 12.5,1.7 12.6,2.3 12.7,1.9 12.8,2.1 12.9,2.8 13,2.2 13.1,2.9 13.2,3.6 13.3,2.2 13.4,2.8 13.5,2.0 13.6,2.4 13.7,2.7 13.8,3.2 13.9,2.0 14,1.4 14.1,2.1 14.2,2.4 14.3,1.0 14.4,2.0 14.5,3.0 14.6,4.2 14.7,2.8 14.8,2.2 14.9,2.5 15,1.5 15.1,2.0 15.2,1.6 15.3,1.9 15.4,1.5 15.5,1.2 15.6,1.1 15.7,2.6 15.8,1.7 15.9,2.3 16,1.5 16.1,1.8 16.2,1.0 16.3,2.1 16.4,1.5 16.5,1.0 16.6,1.6 16.7,1.2 16.8,2.2 16.9,1.5 17,3.2 17.1,1.4 17.2,1.7 17.3,1.2 17.4,3.2 17.5,4.7 17.6,3.0 17.7,2.4 17.8,3.3 17.9,5.7 17.95,3.0 18,2.0 18.1,3.6 18.2,4.0 18.3,3.0 18.4,2.8 18.5,4.4 18.6,5.1 18.7,3.3 18.8,2.3 18.9,6.4 19,2.5 19.1,1.7 19.2,2.8 19.3,3.4 19.4,2.5 19.5,2.0 19.6,2.3 19.7,1.7 19.8,3.0 19.9,2.2 20,1.1 20.1,1.5 20.2,1.8 20.3,2.0 20.4,1.3 20.5,1.0 20.6,1.5 20.7,1.9 20.8,1.2 20.9,0.9 21,0.5 21.2,0.3 21.4,0.2 21.6,0.15 22,0.15 23,0.15 23.9,0.15 24,0.35"/></g>
<rect class="bx" x="139" y="249" width="844" height="155"/>
<g class="tk xm"><text x="139" y="425">00</text><text x="209.3" y="425">02</text><text x="279.7" y="425">04</text><text x="350" y="425">06</text><text x="420.3" y="425">08</text><text x="490.7" y="425">10</text><text x="561" y="425">12</text><text x="631.3" y="425">14</text><text x="701.7" y="425">16</text><text x="772" y="425">18</text><text x="842.3" y="425">20</text><text x="912.7" y="425">22</text><text x="983" y="425">24</text></g>
<text class="hl" x="560" y="449" textLength="92" lengthAdjust="spacingAndGlyphs">Hours, UTC</text>
<text class="yl" transform="translate(52,328) rotate(-90)" textLength="243" lengthAdjust="spacingAndGlyphs">Amplitude, uncalibrated units</text>
</g>

<g transform="translate(0,3037)">
<path class="g" d="M209.3 0V155M279.7 0V155M350 0V155M420.3 0V155M490.7 0V155M561 0V155M631.3 0V155M701.7 0V155M772 0V155M842.3 0V155M912.7 0V155M139 15.5H983M139 31H983M139 46.5H983M139 62H983M139 77.5H983M139 93H983M139 108.5H983M139 124H983M139 139.5H983"/>
<rect class="bx" x="139" y="0" width="844" height="155"/>
<text class="yl" transform="translate(104,78) rotate(-90)" textLength="145" lengthAdjust="spacingAndGlyphs">Doppler Shift (Hz)</text>
<g class="tk ye"><text x="134" y="21.5">4</text><text x="134" y="37">3</text><text x="134" y="52.5">2</text><text x="134" y="68">1</text><text x="134" y="83.5">0</text><text x="134" y="99">-1</text><text x="134" y="114.5">-2</text><text x="134" y="130">-3</text><text x="134" y="145.5">-4</text><text x="134" y="161">-5</text></g>
<g class="tk xm"><text x="209.3" y="175">02</text><text x="279.7" y="175">04</text><text x="350" y="175">06</text><text x="420.3" y="175">08</text><text x="490.7" y="175">10</text><text x="561" y="175">12</text><text x="631.3" y="175">14</text><text x="701.7" y="175">16</text><text x="772" y="175">18</text><text x="842.3" y="175">20</text><text x="912.7" y="175">22</text></g>
<text class="hl" x="560" y="199" textLength="92" lengthAdjust="spacingAndGlyphs">Hours, UTC</text>
<text class="at" x="561" y="242" textLength="265" lengthAdjust="spacingAndGlyphs">Peak Amplitude by Minute</text>
<path class="g" d="M209.3 249V404M279.7 249V404M350 249V404M420.3 249V404M490.7 249V404M561 249V404M631.3 249V404M701.7 249V404M772 249V404M842.3 249V404M912.7 249V404M139 251.2H983M139 276.5H983M139 301.8H983M139 327.1H983M139 352.4H983M139 377.7H983"/>
<g class="tk ye"><text x="133" y="257.2" textLength="57" lengthAdjust="spacingAndGlyphs">0.0012</text><text x="133" y="282.5" textLength="57" lengthAdjust="spacingAndGlyphs">0.0010</text><text x="133" y="307.8" textLength="57" lengthAdjust="spacingAndGlyphs">0.0008</text><text x="133" y="333.1" textLength="57" lengthAdjust="spacingAndGlyphs">0.0006</text><text x="133" y="358.4" textLength="57" lengthAdjust="spacingAndGlyphs">0.0004</text><text x="133" y="383.7" textLength="57" lengthAdjust="spacingAndGlyphs">0.0002</text><text x="133" y="409" textLength="57" lengthAdjust="spacingAndGlyphs">0.0000</text></g>
<g transform="translate(139,403) scale(35.1667,-25.3)"><polyline class="c" vector-effect="non-scaling-stroke" points="0,0.03 2,0.05 3.5,0.05 5,0.05 7,0.04 8,0.08 8.5,0.15 8.7,0.12 9,0.12 9.2,0.05 10.3,0.04 10.35,0.2 10.4,0.04 11.28,0.04 11.32,0.5 11.36,0.04 13,0.06 13.7,0.1 14,0.08 15.02,0.08 15.08,5.75 15.15,0.05 16,0.05 17,0.06 17.7,0.1 18,0.07 18.8,0.1 18.9,0.3 19,0.05 20,0.03 24,0.03"/></g>
<rect class="bx" x="139" y="249" width="844" height="155"/>
<g class="tk xm"><text x="139" y="425">00</text><text x="209.3" y="425">02</text><text x="279.7" y="425">04</text><text x="350" y="425">06</text><text x="420.3" y="425">08</text><text x="490.7" y="425">10</text><text x="561" y="425">12</text><text x="631.3" y="425">14</text><text x="701.7" y="425">16</text><text x="772" y="425">18</text><text x="842.3" y="425">20</text><text x="912.7" y="425">22</text><text x="983" y="425">24</text></g>
<text class="hl" x="560" y="449" textLength="92" lengthAdjust="spacingAndGlyphs">Hours, UTC</text>
<text class="yl" transform="translate(63,328) rotate(-90)" textLength="243" lengthAdjust="spacingAndGlyphs">Amplitude, uncalibrated units</text>
</g>

<g transform="translate(0,3535)">
<path class="g" d="M209.3 0V155M279.7 0V155M350 0V155M420.3 0V155M490.7 0V155M561 0V155M631.3 0V155M701.7 0V155M772 0V155M842.3 0V155M912.7 0V155M139 15.5H983M139 31H983M139 46.5H983M139 62H983M139 77.5H983M139 93H983M139 108.5H983M139 124H983M139 139.5H983"/>
<rect class="bx" x="139" y="0" width="844" height="155"/>
<text class="yl" transform="translate(104,78) rotate(-90)" textLength="145" lengthAdjust="spacingAndGlyphs">Doppler Shift (Hz)</text>
<g class="tk ye"><text x="134" y="21.5">4</text><text x="134" y="37">3</text><text x="134" y="52.5">2</text><text x="134" y="68">1</text><text x="134" y="83.5">0</text><text x="134" y="99">-1</text><text x="134" y="114.5">-2</text><text x="134" y="130">-3</text><text x="134" y="145.5">-4</text><text x="134" y="161">-5</text></g>
<g class="tk xm"><text x="209.3" y="175">02</text><text x="279.7" y="175">04</text><text x="350" y="175">06</text><text x="420.3" y="175">08</text><text x="490.7" y="175">10</text><text x="561" y="175">12</text><text x="631.3" y="175">14</text><text x="701.7" y="175">16</text><text x="772" y="175">18</text><text x="842.3" y="175">20</text><text x="912.7" y="175">22</text></g>
<text class="hl" x="560" y="199" textLength="92" lengthAdjust="spacingAndGlyphs">Hours, UTC</text>
<text class="at" x="561" y="242" textLength="265" lengthAdjust="spacingAndGlyphs">Peak Amplitude by Minute</text>
<path class="g" d="M209.3 249V404M279.7 249V404M350 249V404M420.3 249V404M490.7 249V404M561 249V404M631.3 249V404M701.7 249V404M772 249V404M842.3 249V404M912.7 249V404M139 263H983M139 286.3H983M139 309.7H983M139 333H983M139 356.3H983M139 379.7H983"/>
<g class="tk ye"><text x="133" y="269" textLength="68" lengthAdjust="spacingAndGlyphs">0.00006</text><text x="133" y="292.3" textLength="68" lengthAdjust="spacingAndGlyphs">0.00005</text><text x="133" y="315.7" textLength="68" lengthAdjust="spacingAndGlyphs">0.00004</text><text x="133" y="339" textLength="68" lengthAdjust="spacingAndGlyphs">0.00003</text><text x="133" y="362.3" textLength="68" lengthAdjust="spacingAndGlyphs">0.00002</text><text x="133" y="385.7" textLength="68" lengthAdjust="spacingAndGlyphs">0.00001</text><text x="133" y="409" textLength="68" lengthAdjust="spacingAndGlyphs">0.00000</text></g>
<g transform="translate(139,403) scale(35.1667,-23.3)"><polyline class="c" vector-effect="non-scaling-stroke" points="0,0.1 4,0.1 8,0.1 8.3,0.2 8.5,0.3 8.7,0.15 8.9,0.25 9.1,0.1 11,0.1 11.3,0.1 11.4,0.5 11.45,2.4 11.5,6.3 11.55,2.0 11.6,0.5 11.65,1.0 11.7,1.3 11.75,0.5 11.8,0.1 11.85,4.8 11.9,2.5 11.95,0.1 12.5,0.1 13,0.15 13.2,0.2 13.3,0.6 13.4,0.5 13.5,0.9 13.6,0.7 13.7,1.0 13.8,1.3 13.9,1.1 14,1.2 14.1,1.0 14.15,1.4 14.25,1.0 14.4,0.8 14.5,0.9 14.6,1.7 14.65,1.2 14.7,0.9 14.8,0.8 15,0.7 15.1,0.4 15.2,0.2 15.5,0.1 16,0.1 16.3,0.15 16.5,0.2 16.6,0.3 16.7,0.2 17,0.25 17.3,0.35 17.5,0.45 17.7,0.5 17.8,0.45 17.9,0.6 18,0.5 18.1,0.35 18.3,0.2 18.6,0.15 18.8,0.2 19,0.1 20,0.08 24,0.08"/></g>
<rect class="bx" x="139" y="249" width="844" height="155"/>
<g class="tk xm"><text x="139" y="425">00</text><text x="209.3" y="425">02</text><text x="279.7" y="425">04</text><text x="350" y="425">06</text><text x="420.3" y="425">08</text><text x="490.7" y="425">10</text><text x="561" y="425">12</text><text x="631.3" y="425">14</text><text x="701.7" y="425">16</text><text x="772" y="425">18</text><text x="842.3" y="425">20</text><text x="912.7" y="425">22</text><text x="983" y="425">24</text></g>
<text class="hl" x="560" y="449" textLength="92" lengthAdjust="spacingAndGlyphs">Hours, UTC</text>
<text class="yl" transform="translate(52,328) rotate(-90)" textLength="243" lengthAdjust="spacingAndGlyphs">Amplitude, uncalibrated units</text>
</g>

<g transform="translate(0,4033)">
<path class="g" d="M209.3 0V155M279.7 0V155M350 0V155M420.3 0V155M490.7 0V155M561 0V155M631.3 0V155M701.7 0V155M772 0V155M842.3 0V155M912.7 0V155M139 15.5H983M139 31H983M139 46.5H983M139 62H983M139 77.5H983M139 93H983M139 108.5H983M139 124H983M139 139.5H983"/>
<rect class="bx" x="139" y="0" width="844" height="155"/>
<text class="yl" transform="translate(104,78) rotate(-90)" textLength="145" lengthAdjust="spacingAndGlyphs">Doppler Shift (Hz)</text>
<g class="tk ye"><text x="134" y="21.5">4</text><text x="134" y="37">3</text><text x="134" y="52.5">2</text><text x="134" y="68">1</text><text x="134" y="83.5">0</text><text x="134" y="99">-1</text><text x="134" y="114.5">-2</text><text x="134" y="130">-3</text><text x="134" y="145.5">-4</text><text x="134" y="161">-5</text></g>
<g class="tk xm"><text x="209.3" y="175">02</text><text x="279.7" y="175">04</text><text x="350" y="175">06</text><text x="420.3" y="175">08</text><text x="490.7" y="175">10</text><text x="561" y="175">12</text><text x="631.3" y="175">14</text><text x="701.7" y="175">16</text><text x="772" y="175">18</text><text x="842.3" y="175">20</text><text x="912.7" y="175">22</text></g>
<text class="hl" x="560" y="199" textLength="92" lengthAdjust="spacingAndGlyphs">Hours, UTC</text>
<text class="at" x="561" y="242" textLength="265" lengthAdjust="spacingAndGlyphs">Peak Amplitude by Minute</text>
<path class="g" d="M209.3 249V404M279.7 249V404M350 249V404M420.3 249V404M490.7 249V404M561 249V404M631.3 249V404M701.7 249V404M772 249V404M842.3 249V404M912.7 249V404M139 253H983M139 278H983M139 303H983M139 328H983M139 353H983M139 378H983"/>
<g class="tk ye"><text x="133" y="259" textLength="77" lengthAdjust="spacingAndGlyphs">0.000006</text><text x="133" y="284" textLength="77" lengthAdjust="spacingAndGlyphs">0.000005</text><text x="133" y="309" textLength="77" lengthAdjust="spacingAndGlyphs">0.000004</text><text x="133" y="334" textLength="77" lengthAdjust="spacingAndGlyphs">0.000003</text><text x="133" y="359" textLength="77" lengthAdjust="spacingAndGlyphs">0.000002</text><text x="133" y="384" textLength="77" lengthAdjust="spacingAndGlyphs">0.000001</text><text x="133" y="409" textLength="77" lengthAdjust="spacingAndGlyphs">0.000000</text></g>
<g transform="translate(139,403) scale(35.1667,-25)"><polyline class="c" vector-effect="non-scaling-stroke" points="0,0.1 3,0.1 6.45,0.1 6.5,0.4 6.55,0.1 7.3,0.1 7.35,0.2 7.4,0.1 8,0.1 8.05,0.5 8.15,0.3 8.2,0.5 8.3,0.2 8.4,0.6 8.5,0.3 8.6,1.0 8.7,1.2 8.8,1.3 8.9,1.1 9,2.6 9.05,1.2 9.1,0.8 9.2,0.6 9.3,0.9 9.4,0.4 9.5,0.5 9.6,0.8 9.7,0.4 9.8,0.7 9.9,0.5 10,0.6 10.1,1.0 10.2,1.2 10.25,2.2 10.3,2.4 10.35,1.8 10.45,0.3 10.55,0.6 10.6,1.2 10.7,1.1 10.8,0.3 10.9,0.9 11,0.5 11.1,1.0 11.2,0.3 11.3,0.9 11.4,0.7 11.55,0.05 11.7,0.05 11.75,4.3 11.8,0.05 12.2,0.1 12.4,0.2 12.5,0.1 12.6,0.3 12.7,0.1 13,0.1 13.3,0.15 13.5,0.2 13.6,0.6 13.7,0.8 13.8,1.8 13.9,2.6 14,3.0 14.1,3.4 14.2,2.2 14.3,2.4 14.35,2.9 14.45,1.5 14.5,1.0 14.55,2.8 14.6,4.6 14.7,2.3 14.8,3.6 14.9,4.8 15,3.4 15.1,4.4 15.2,6.0 15.25,3.0 15.35,1.5 15.5,1.2 15.6,0.9 15.7,2.4 15.75,1.4 15.85,0.6 16,0.4 16.2,0.3 16.3,0.4 16.4,0.6 16.5,1.2 16.55,2.5 16.6,3.5 16.7,2.6 16.8,2.9 16.9,2.2 17,2.9 17.1,1.5 17.2,1.1 17.3,1.3 17.4,1.0 17.5,0.9 17.6,0.8 17.7,1.0 17.8,1.3 17.9,1.8 17.95,2.4 18.05,1.1 18.15,0.9 18.25,0.7 18.35,0.3 18.5,0.1 18.8,0.1 18.85,0.5 18.9,0.1 20,0.1 21.5,0.1 22,0.1 22.05,0.4 22.1,0.1 23.1,0.15 23.2,0.2 23.3,0.1 24,0.1"/></g>
<rect class="bx" x="139" y="249" width="844" height="155"/>
<g class="tk xm"><text x="139" y="425">00</text><text x="209.3" y="425">02</text><text x="279.7" y="425">04</text><text x="350" y="425">06</text><text x="420.3" y="425">08</text><text x="490.7" y="425">10</text><text x="561" y="425">12</text><text x="631.3" y="425">14</text><text x="701.7" y="425">16</text><text x="772" y="425">18</text><text x="842.3" y="425">20</text><text x="912.7" y="425">22</text><text x="983" y="425">24</text></g>
<text class="hl" x="560" y="449" textLength="92" lengthAdjust="spacingAndGlyphs">Hours, UTC</text>
<text class="yl" transform="translate(42,328) rotate(-90)" textLength="243" lengthAdjust="spacingAndGlyphs">Amplitude, uncalibrated units</text>
</g>
</svg>
</body></html>
